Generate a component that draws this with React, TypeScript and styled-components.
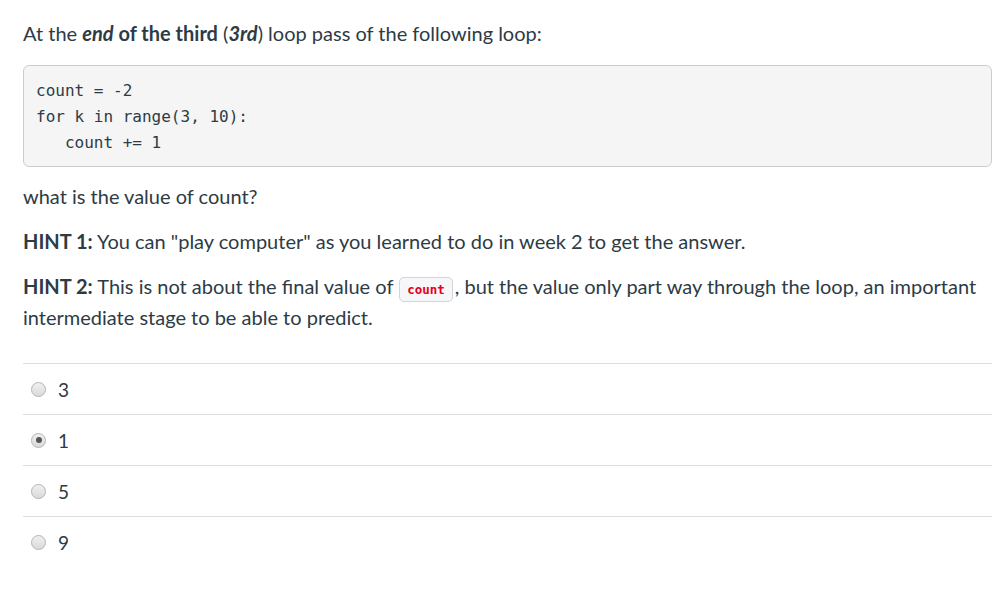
import React from "react";
import styled, { createGlobalStyle } from "styled-components";

const Global = createGlobalStyle`
  html, body { margin: 0; padding: 0; background: #fff; }
  body { font-family: Lato, "Open Sans", sans-serif; color: #2d3b45; }
`;

const Page = styled.div`
  padding: 20px 1px 0 23px;
  width: 969px;
`;

const Para = styled.p<{ $gap?: number; $lh?: number }>`
  margin: 0 0 ${(p) => p.$gap ?? 18}px 0;
  font-size: 20px;
  line-height: ${(p) => p.$lh ?? 27}px;
`;

const CodeBlock = styled.pre`
  margin: 0 0 16px 0;
  padding: 12px 12px 10px;
  background: #f5f5f5;
  border: 1px solid #ccc;
  border-radius: 6px;
  font-family: "DejaVu Sans Mono", "Liberation Mono", monospace;
  font-size: 16px;
  line-height: 26px;
  color: #2d3b45;
  height: 78px;
`;

const InlineCode = styled.code`
  font-family: "DejaVu Sans Mono", "Liberation Mono", monospace;
  font-size: 12.5px;
  line-height: 1;
  font-weight: bold;
  color: #e8001c;
  background: #f7f7f9;
  border: 1px solid #d4d4d4;
  border-radius: 5px;
  padding: 4px 7px;
  margin: 0 2px 0 1px;
`;

const Answers = styled.div`
  margin-top: 30px;
`;

const Row = styled.label`
  display: flex;
  align-items: center;
  height: 50px;
  border-top: 1px solid #ddd;
  font-size: 19px;
  padding-left: 8px;
`;

const Radio = styled.span<{ $checked?: boolean }>`
  position: relative;
  width: 13px;
  height: 13px;
  border-radius: 50%;
  border: 1px solid #b4b4b4;
  background: linear-gradient(#f0f0f0, #dadada);
  margin-right: 12px;
  flex: none;
  &::after {
    content: "";
    display: ${(p) => (p.$checked ? "block" : "none")};
    position: absolute;
    left: 3.5px;
    top: 3.5px;
    width: 6px;
    height: 6px;
    border-radius: 50%;
    background: #555;
  }
`;

const answers = [
  { v: "3", c: false },
  { v: "1", c: true },
  { v: "5", c: false },
  { v: "9", c: false },
];

export default function App() {
  return (
    <>
      <Global />
      <Page>
        <Para>
          At the <strong><em>end</em> of the third</strong> (<strong><em>3rd</em></strong>) loop pass of
          the following loop:
        </Para>
        <CodeBlock>{`count = -2
for k in range(3, 10):
   count += 1`}</CodeBlock>
        <Para>what is the value of count?</Para>
        <Para $gap={16}>
          <strong>HINT 1:</strong> You can "play computer" as you learned to do in week 2 to get the
          answer.
        </Para>
        <Para $lh={31} $gap={0}>
          <strong>HINT 2:</strong> This is not about the final value of <InlineCode>count</InlineCode>,
          but the value only part way through the loop, an important intermediate stage to be able to
          predict.
        </Para>
        <Answers>
          {answers.map((a) => (
            <Row key={a.v}>
              <Radio $checked={a.c} />
              {a.v}
            </Row>
          ))}
        </Answers>
      </Page>
    </>
  );
}
